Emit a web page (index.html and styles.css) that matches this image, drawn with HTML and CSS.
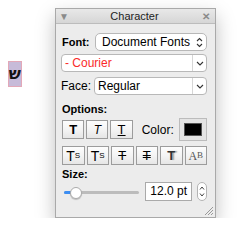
FILE: index.html
```html
<!DOCTYPE html>
<html lang="en">
<head>
    <meta charset="UTF-8">
    <meta name="viewport" content="width=device-width, initial-scale=1.0">
    <title>Character</title>
    <link rel="stylesheet" href="styles.css">
</head>
<body>

    <div class="desk">
        <span class="glyph" dir="rtl">ש</span>

        <div class="panel">
            <div class="titlebar">
                <span class="tri">▼</span>
                <span class="title">Character</span>
                <span class="close">✕</span>
            </div>

            <div class="content">
                <div class="row font-row">
                    <span class="label">Font:</span>
                    <div class="popup">
                        <span>Document Fonts</span>
                        <svg width="7" height="11" viewBox="0 0 7 11"><path d="M1 4 L3.5 1.5 L6 4 M1 7 L3.5 9.5 L6 7" fill="none" stroke="#333" stroke-width="1.1"/></svg>
                    </div>
                </div>

                <div class="combo courier">
                    <span class="text">- Courier</span>
                    <span class="arrow"><svg width="8" height="5" viewBox="0 0 8 5"><path d="M1 1 L4 4 L7 1" fill="none" stroke="#333" stroke-width="1.1"/></svg></span>
                </div>

                <div class="row face-row">
                    <span class="label plain">Face:</span>
                    <div class="combo face">
                        <span class="text">Regular</span>
                        <span class="arrow"><svg width="8" height="5" viewBox="0 0 8 5"><path d="M1 1 L4 4 L7 1" fill="none" stroke="#333" stroke-width="1.1"/></svg></span>
                    </div>
                </div>

                <div class="label section">Options:</div>

                <div class="row btn-row first">
                    <span class="btn"><b>T</b></span>
                    <span class="btn"><i>T</i></span>
                    <span class="btn"><u>T</u></span>
                    <span class="color-label">Color:</span>
                    <span class="well"><span class="swatch"></span></span>
                </div>

                <div class="row btn-row second">
                    <span class="btn big">T<sub>S</sub></span>
                    <span class="btn big">T<sup>S</sup></span>
                    <span class="btn strike">T</span>
                    <span class="btn strike double">T</span>
                    <span class="btn shadow">T</span>
                    <span class="btn caps">A<small>B</small></span>
                </div>

                <div class="label section size">Size:</div>

                <div class="row size-row">
                    <div class="slider">
                        <span class="track"></span>
                        <span class="fill"></span>
                        <span class="thumb"></span>
                    </div>
                    <span class="field">12.0 pt</span>
                    <span class="stepper">
                        <svg width="6" height="13" viewBox="0 0 6 13"><path d="M1 4.5 L3 2 L5 4.5 M1 8.5 L3 11 L5 8.5" fill="none" stroke="#444" stroke-width="1"/></svg>
                    </span>
                </div>
            </div>

            <svg class="grip" width="9" height="9" viewBox="0 0 9 9"><path d="M1 9 L9 1 M4 9 L9 4 M7 9 L9 7" stroke="#999" stroke-width="1"/></svg>
        </div>
    </div>

</body>
</html>
```

FILE: styles.css
```css
body {
    margin: 0;
    background-color: #fff;
    font-family: "Liberation Sans", Arial, sans-serif;
    color: #000;
}

.desk {
    display: flex;
    align-items: flex-start;
}

.glyph {
    margin: 61px 0 0 8px;
    width: 14px;
    height: 26px;
    box-sizing: border-box;
    background-color: #c7bbd9;
    border: 1px solid #e3a8b8;
    font-family: "DejaVu Sans", sans-serif;
    font-size: 16px;
    font-weight: bold;
    line-height: 24px;
    text-align: center;
    color: #111;
}

.panel {
    position: relative;
    margin: 8px 0 0 33px;
    width: 161px;
    height: 210px;
    box-sizing: border-box;
    border: 1px solid #a9a9a9;
    background-color: #ececec;
    box-shadow: 0 8px 18px rgba(0, 0, 0, 0.25);
}

.titlebar {
    height: 14px;
    display: grid;
    grid-template-columns: 1fr auto 1fr;
    align-items: center;
    padding: 0 5px 0 3px;
    background: linear-gradient(#e8e8e8, #d6d6d6);
    border-bottom: 1px solid #bcbcbc;
    font-size: 11px;
    color: #222;
}

.titlebar .tri {
    font-size: 10px;
    color: #8a8a8a;
}

.titlebar .close {
    justify-self: end;
    font-size: 10px;
    font-weight: bold;
    color: #8a8a8a;
}

.content {
    padding: 9px 8px 0 5px;
}

.row {
    display: flex;
    align-items: center;
}

.label {
    font-size: 11px;
    font-weight: bold;
}

.label.plain {
    font-size: 12px;
    font-weight: normal;
}

.font-row {
    height: 18px;
}

.font-row .label {
    width: 34px;
    padding-left: 1px;
    box-sizing: border-box;
}

.popup {
    width: 112px;
    height: 18px;
    box-sizing: border-box;
    display: flex;
    align-items: center;
    justify-content: space-between;
    padding: 0 3px 0 6px;
    background-color: #fff;
    border: 1px solid #b8b8b8;
    border-radius: 5px;
    font-size: 12px;
}

.combo {
    height: 18px;
    box-sizing: border-box;
    display: flex;
    background-color: #fff;
    border: 1px solid #b8b8b8;
    border-radius: 4px;
    font-size: 12px;
}

.combo .text {
    flex: 1;
    padding-left: 3px;
    line-height: 16px;
}

.combo .arrow {
    width: 13px;
    display: flex;
    align-items: center;
    justify-content: center;
    border-left: 1px solid #d6d6d6;
}

.courier {
    margin-top: 3px;
    width: 146px;
    color: #fa2a2a;
}

.face-row {
    margin-top: 5px;
    height: 18px;
}

.face-row .label {
    width: 33px;
}

.face {
    width: 113px;
}

.section {
    margin-top: 7px;
    height: 14px;
    line-height: 14px;
    padding-left: 1px;
}

.btn-row.first {
    margin-top: 2px;
    height: 23px;
}

.btn-row.second {
    margin-top: 5px;
    height: 19px;
}

.btn {
    width: 23px;
    height: 19px;
    box-sizing: border-box;
    margin-left: 2px;
    display: flex;
    align-items: center;
    justify-content: center;
    background: linear-gradient(#fdfdfd 0%, #f4f4f4 50%, #e6e6e6 100%);
    border: 1px solid #9c9c9c;
    font-size: 13px;
    line-height: 1;
}

.btn:first-child {
    margin-left: 1px;
}

.btn i {
    font-weight: normal;
    font-size: 12px;
}

.btn.big {
    font-size: 14px;
}

.btn sub,
.btn sup {
    font-size: 8px;
}

.btn sub {
    vertical-align: -3px;
}

.btn sup {
    vertical-align: 5px;
}

.btn.strike {
    text-decoration: line-through;
}

.btn.double {
    text-decoration-style: double;
}

.btn.shadow {
    font-weight: bold;
    color: #333;
    text-shadow: 2px 0 1px #aaa;
}

.btn.caps {
    font-family: "Liberation Serif", "Times New Roman", serif;
    font-size: 12px;
    color: #555;
}

.btn.caps small {
    font-size: 9px;
}

.color-label {
    margin-left: 9px;
    font-size: 12px;
}

.well {
    margin-left: 5px;
    width: 29px;
    height: 23px;
    box-sizing: border-box;
    padding: 4px;
    background-color: #e4e4e4;
    border: 1px solid #bcbcbc;
}

.swatch {
    display: block;
    height: 100%;
    background-color: #000;
    border: 1px solid #555;
    box-sizing: border-box;
}

.section.size {
    margin-top: 2px;
}

.size-row {
    margin-top: 1px;
    height: 19px;
}

.slider {
    position: relative;
    width: 80px;
    height: 19px;
}

.slider .track {
    position: absolute;
    left: 3px;
    right: 1px;
    top: 9px;
    height: 3px;
    border-radius: 2px;
    background-color: #bcbcbc;
}

.slider .fill {
    position: absolute;
    left: 3px;
    width: 10px;
    top: 9px;
    height: 3px;
    border-radius: 2px;
    background-color: #3c8ef3;
}

.slider .thumb {
    position: absolute;
    left: 9px;
    top: 5px;
    width: 12px;
    height: 12px;
    box-sizing: border-box;
    border-radius: 50%;
    background-color: #fff;
    border: 1px solid #ababab;
    box-shadow: 0 1px 1px rgba(0, 0, 0, 0.2);
}

.field {
    margin-left: 5px;
    width: 47px;
    height: 19px;
    box-sizing: border-box;
    padding-right: 4px;
    background-color: #fff;
    border: 1px solid #aaa;
    font-size: 12px;
    line-height: 17px;
    text-align: right;
}

.stepper {
    margin-left: 5px;
    width: 10px;
    height: 19px;
    box-sizing: border-box;
    display: flex;
    align-items: center;
    justify-content: center;
    background-color: #fff;
    border: 1px solid #b4b4b4;
    border-radius: 5px;
}

.grip {
    position: absolute;
    right: 2px;
    bottom: 2px;
}
```
